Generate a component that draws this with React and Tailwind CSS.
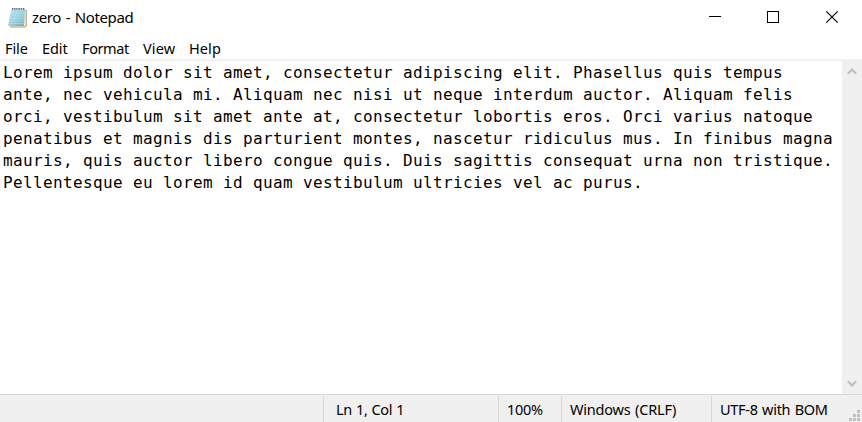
const lines = [
  'Lorem ipsum dolor sit amet, consectetur adipiscing elit. Phasellus quis tempus',
  'ante, nec vehicula mi. Aliquam nec nisi ut neque interdum auctor. Aliquam felis',
  'orci, vestibulum sit amet ante at, consectetur lobortis eros. Orci varius natoque',
  'penatibus et magnis dis parturient montes, nascetur ridiculus mus. In finibus magna',
  'mauris, quis auctor libero congue quis. Duis sagittis consequat urna non tristique.',
  'Pellentesque eu lorem id quam vestibulum ultricies vel ac purus.',
];

function NotepadIcon() {
  return (
    <svg width="22" height="22" viewBox="0 0 22 22" className="shrink-0">
      <defs>
        <linearGradient id="page" x1="0" y1="0" x2="1" y2="1">
          <stop offset="0" stopColor="#c4e6ee" />
          <stop offset="0.5" stopColor="#9bd2df" />
          <stop offset="1" stopColor="#62b0c3" />
        </linearGradient>
      </defs>
      <path d="M17.5 3h2.3v16.2L18.3 20.6H3V19z" fill="#b9a27a" />
      <path d="M17 4h1.8v15L17.6 19.6H3V18z" fill="#f1e8d2" />
      <path d="M4.2 3H18L16.9 18.9H1Z" fill="url(#page)" />
      <path d="M4 6.5h13.5M3.5 9h13.8M3.1 11.5h14M2.6 14h14.3M2.2 16.5h14.5" stroke="#b9e1e9" strokeWidth="0.6" />
      <path d="M4.8 2h13.2" stroke="#c6cccf" strokeWidth="2" />
      <path d="M5 1.9h13" stroke="#68747a" strokeWidth="1.7" strokeDasharray="1.1 1.1" />
    </svg>
  );
}

function Chevron({ down }) {
  return (
    <svg width="10" height="7" viewBox="0 0 10 7" className={down ? 'rotate-180' : ''}>
      <path d="M0.8 5.8 5 1.6 9.2 5.8" fill="none" stroke="#bfbfbf" strokeWidth="2.2" />
    </svg>
  );
}

function TitleBar() {
  return (
    <header className="flex h-[36px] shrink-0 items-center pl-[7px]">
      <div className="h-[22px]"><NotepadIcon /></div>
      <span className="ml-[3px] pb-[2px] text-[15px] tracking-[-0.35px] [word-spacing:1px]">zero - Notepad</span>
      <svg width="130" height="13" viewBox="0 0 130 13" className="mr-[23px] -mt-[2px] ml-auto" fill="none" stroke="#000">
        <path d="M0 5.5h12" shapeRendering="crispEdges" />
        <path d="M58.5 0.5h11v11h-11z" shapeRendering="crispEdges" />
        <path d="M117.3 0.3l11.4 11.4M128.7 0.3l-11.4 11.4" strokeWidth="1.1" />
      </svg>
    </header>
  );
}

function MenuBar() {
  return (
    <nav className="flex h-[23px] shrink-0 items-center pt-[2px] pl-[5px] text-[14.5px]">
      <span className="w-[37px] tracking-[-0.1px]">File</span>
      <span className="w-[40px] tracking-[-0.1px]">Edit</span>
      <span className="w-[61px] tracking-[-0.4px]">Format</span>
      <span className="w-[46px] tracking-[0.1px]">View</span>
      <span className="tracking-[0.1px]">Help</span>
    </nav>
  );
}

function StatusBar() {
  return (
    <footer className="flex h-[28px] shrink-0 border-t border-[#d7d7d7] bg-[#f0f0f0] pt-px text-[14.5px] leading-[26px] whitespace-nowrap">
      <div className="w-[323px]" />
      <div className="w-[175px] border-l border-[#d7d7d7] pl-[12px] tracking-[-0.3px] [word-spacing:0.5px]">Ln 1, Col 1</div>
      <div className="w-[63px] border-l border-[#d7d7d7] pl-[8px] tracking-[-0.3px]">100%</div>
      <div className="w-[150px] border-l border-[#d7d7d7] pl-[8px] tracking-[-0.2px] [word-spacing:1px]">Windows (CRLF)</div>
      <div className="flex flex-1 border-l border-[#d7d7d7] pl-[8px]">
        <span className="tracking-[-0.3px] [word-spacing:1px]">UTF-8 with BOM</span>
        <svg width="11" height="11" viewBox="0 0 11 11" className="mt-[14px] mr-[2px] ml-auto" fill="#bfbfbf" shapeRendering="crispEdges">
          <path d="M8 0h3v3H8zM4 4h3v3H4zM8 4h3v3H8zM0 8h3v3H0zM4 8h3v3H4zM8 8h3v3H8z" />
        </svg>
      </div>
    </footer>
  );
}

export default function App() {
  return (
    <div className="flex h-[422px] w-[862px] flex-col overflow-hidden bg-white font-['Noto_Sans',sans-serif] text-black">
      <TitleBar />
      <MenuBar />
      <main className="flex min-h-0 flex-1 border-t-2 border-[#f0f0f0]">
        <div className="flex-1 pt-px pl-[3px] font-['DejaVu_Sans_Mono',monospace] text-[16px] leading-[22px] tracking-[0.367px] whitespace-pre">
          {lines.map((line) => (
            <div key={line}>{line}</div>
          ))}
        </div>
        <aside className="flex w-[20px] shrink-0 flex-col items-center justify-between bg-[#f0f0f0] pt-[7px] pb-[7px]">
          <Chevron />
          <Chevron down />
        </aside>
      </main>
      <StatusBar />
    </div>
  );
}
